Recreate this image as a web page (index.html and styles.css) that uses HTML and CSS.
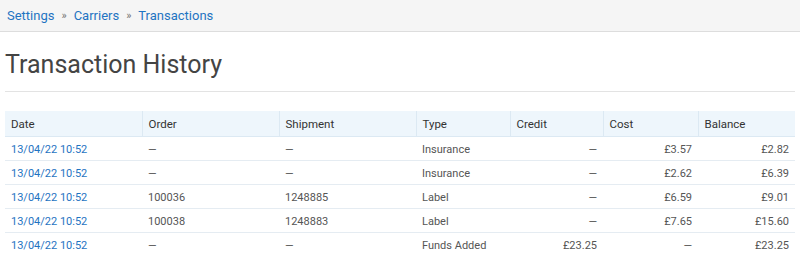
FILE: index.html
```html
<!DOCTYPE html>
<html>
<head>
<meta charset="utf-8">
<link rel="stylesheet" href="styles.css">
</head>
<body>
<nav class="crumbs">
  <a href="#">Settings</a><span class="sep">»</span><a href="#">Carriers</a><span class="sep">»</span><a href="#">Transactions</a>
</nav>
<main class="content">
  <h1 class="title">Transaction History</h1>
  <hr class="rule">
  <table class="tx">
    <thead>
      <tr><th class="c-date">Date</th><th class="c-order">Order</th><th class="c-ship">Shipment</th><th class="c-type">Type</th><th class="c-credit">Credit</th><th class="c-cost">Cost</th><th class="c-bal">Balance</th></tr>
    </thead>
    <tbody>
      <tr><td><a href="#">13/04/22 10:52</a></td><td>—</td><td>—</td><td>Insurance</td><td class="num">—</td><td class="num">£3.57</td><td class="num">£2.82</td></tr>
      <tr><td><a href="#">13/04/22 10:52</a></td><td>—</td><td>—</td><td>Insurance</td><td class="num">—</td><td class="num">£2.62</td><td class="num">£6.39</td></tr>
      <tr><td><a href="#">13/04/22 10:52</a></td><td>100036</td><td>1248885</td><td>Label</td><td class="num">—</td><td class="num">£6.59</td><td class="num">£9.01</td></tr>
      <tr><td><a href="#">13/04/22 10:52</a></td><td>100038</td><td>1248883</td><td>Label</td><td class="num">—</td><td class="num">£7.65</td><td class="num">£15.60</td></tr>
      <tr><td><a href="#">13/04/22 10:52</a></td><td>—</td><td>—</td><td>Funds Added</td><td class="num">£23.25</td><td class="num">—</td><td class="num">£23.25</td></tr>
    </tbody>
  </table>
</main>
</body>
</html>
```
FILE: styles.css
```css
html, body { margin: 0; padding: 0; background: #fff; }
body { font-family: Roboto, "Liberation Sans", sans-serif; color: #555; }
a { color: #1f74c2; text-decoration: none; }
.crumbs {
  background: #f5f5f5;
  border-bottom: 1px solid #ddd;
  height: 32px;
  box-sizing: border-box;
  padding: 7px 7px 0;
  font-size: 13px;
  line-height: 17px;
}
.crumbs .sep { color: #777; font-size: 11px; margin: 0 7px; vertical-align: 1px; }
.content { padding: 0 5px; }
.title {
  margin: 17px 0 0;
  font-weight: 400;
  font-size: 25px;
  line-height: 32px;
  color: #444;
}
.rule { border: 0; border-top: 1px solid #e3e3e3; margin: 10px 0 19px; }
.tx { width: 790px; border-collapse: collapse; font-size: 11px; table-layout: fixed; }
.tx th, .tx td { height: 24px; padding: 2px 6px 0; box-sizing: border-box; text-align: left; vertical-align: middle; }
.tx th { height: 25px; background: #eef6fc; font-weight: 400; color: #333; border-left: 1px solid #dce9f3; border-bottom: 1px solid #dce9f3; font-size: 11.5px; }
.tx th:first-child { border-left: 0; }
.tx td { border-bottom: 1px solid #e5ecf2; }
.tx tbody tr:last-child td { border-bottom: 0; }
.tx td.num { text-align: right; }
.c-date, .c-order, .c-ship { width: 137px; }
.c-type { width: 94px; }
.c-credit { width: 93px; }
.c-cost { width: 95px; }
.c-bal { width: 97px; }
```
